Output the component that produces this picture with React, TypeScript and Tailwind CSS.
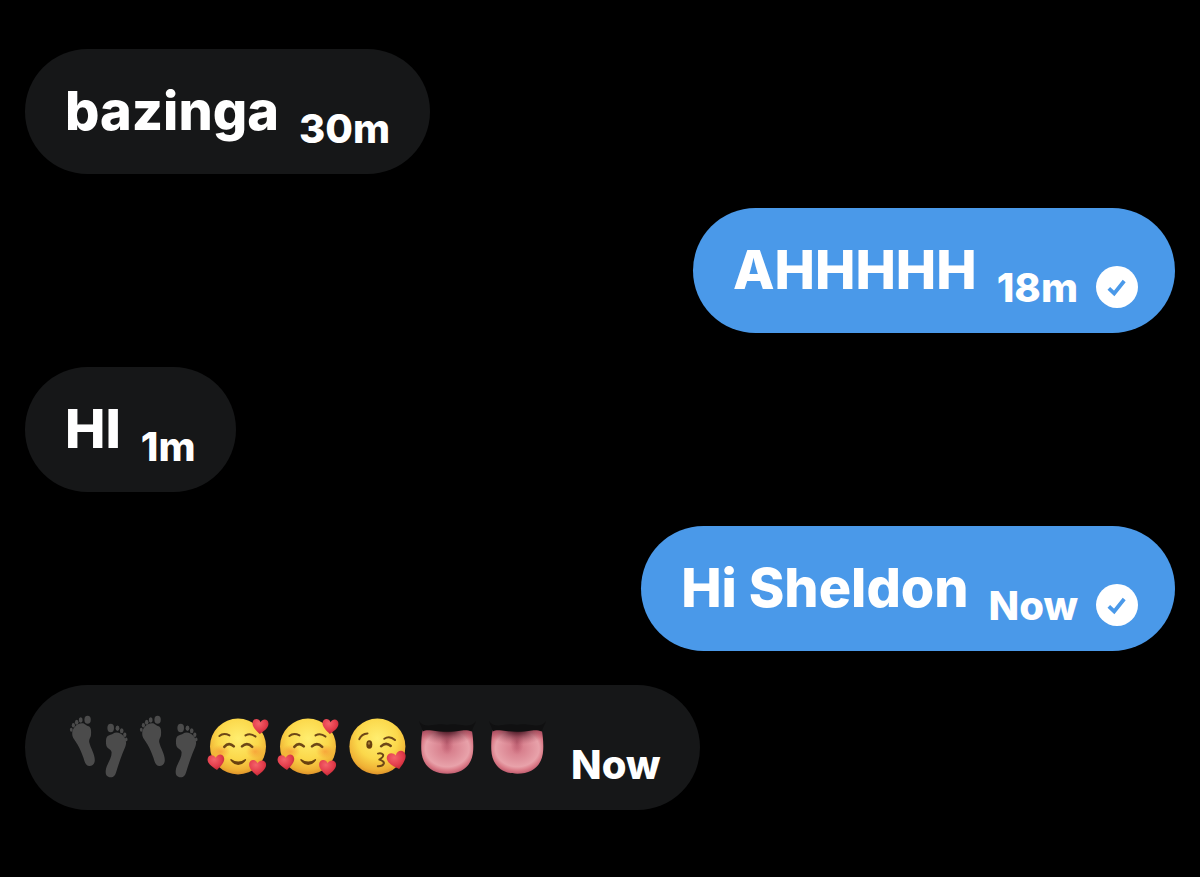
import type { ReactNode } from "react";

const HEART =
  "M0 8 C-3 5.5 -8.5 1.5 -8.5 -3 C-8.5 -8.5 -2 -9 0 -4.5 C2 -9 8.5 -8.5 8.5 -3 C8.5 1.5 3 5.5 0 8 Z";

function Gradients() {
  return (
    <svg width="0" height="0" className="absolute" aria-hidden="true">
      <defs>
        <radialGradient id="face" cx="0.5" cy="0.36" r="0.66">
          <stop offset="0" stopColor="#ffee70" />
          <stop offset="0.55" stopColor="#fbd84b" />
          <stop offset="0.85" stopColor="#efb034" />
          <stop offset="1" stopColor="#d98c28" />
        </radialGradient>
        <radialGradient id="blush">
          <stop offset="0" stopColor="#f47a2c" stopOpacity="0.5" />
          <stop offset="1" stopColor="#f47a2c" stopOpacity="0" />
        </radialGradient>
        <radialGradient id="heart" cx="0.4" cy="0.3" r="0.75">
          <stop offset="0" stopColor="#f4626a" />
          <stop offset="0.6" stopColor="#e23c4b" />
          <stop offset="1" stopColor="#b9252f" />
        </radialGradient>
        <radialGradient id="tongue" cx="0.5" cy="0.42" r="0.6">
          <stop offset="0" stopColor="#d27584" />
          <stop offset="0.7" stopColor="#e8a2aa" />
          <stop offset="0.85" stopColor="#d97986" />
          <stop offset="1" stopColor="#b9566a" />
        </radialGradient>
        <radialGradient id="mouthShade" cx="0.5" cy="-0.02" r="0.5" gradientTransform="translate(-0.1 0) scale(1.2 0.7)">
          <stop offset="0" stopColor="#2a0a12" />
          <stop offset="0.35" stopColor="#5c1e2d" stopOpacity="0.75" />
          <stop offset="1" stopColor="#a84558" stopOpacity="0" />
        </radialGradient>
        <radialGradient id="groove">
          <stop offset="0" stopColor="#a04358" stopOpacity="0.6" />
          <stop offset="1" stopColor="#b85468" stopOpacity="0" />
        </radialGradient>
      </defs>
    </svg>
  );
}

function Emoji({ label, children }: { label: string; children: ReactNode }) {
  return (
    <svg viewBox="0 2 66 74" role="img" aria-label={label} className="h-[74px] w-[66px] shrink-0">
      {children}
    </svg>
  );
}

function Footprints() {
  return (
    <Emoji label="Footprints">
      <g fill="#4b4b4b">
        <ellipse cx="22.6" cy="11.7" rx="3.2" ry="4" />
        <ellipse cx="15.7" cy="12" rx="1.9" ry="2.7" />
        <ellipse cx="11.7" cy="14.2" rx="1.8" ry="2.5" />
        <ellipse cx="8.4" cy="17.3" rx="1.6" ry="2.2" />
        <ellipse cx="6.3" cy="21.7" rx="1.4" ry="2" />
        <path d="M7.2 26 C7 21 11 15.5 17 15.3 C20 15.3 20.5 17.4 23 18 C26.5 19 26.2 23 26 27 C25.8 30 23.5 31 24.3 34.5 C25.5 40 29.8 46 29.8 52 C29.8 55.8 27.5 58 24.5 58 C20.5 58 19.8 54 18.5 50 C16.8 45 15 41 12.5 36.5 C10 32 7.4 30 7.2 26 Z" />
        <ellipse cx="45.7" cy="20" rx="3.3" ry="4.2" />
        <ellipse cx="52.5" cy="20.2" rx="1.9" ry="2.7" />
        <ellipse cx="56.7" cy="22.8" rx="1.8" ry="2.5" />
        <ellipse cx="59.8" cy="26.8" rx="1.6" ry="2.2" />
        <ellipse cx="61.2" cy="31.4" rx="1.3" ry="1.9" />
        <path d="M41 35.5 C40.8 30 41.5 27.8 45.5 26.8 C48 26.2 48.5 24.5 51.5 24.5 C57.5 24.8 61.8 30.5 61 36 C60.4 39.5 58.8 42 57.3 46 C55 52 53 58 51.2 64 C50 68 48.5 69.3 45.7 69.2 C41.8 69 40.4 66.5 40.7 62.7 C41.2 56.5 46.7 51 46.6 44.5 C46.5 40.5 41.3 41.5 41 35.5 Z" />
      </g>
    </Emoji>
  );
}

function SmilingHearts() {
  return (
    <Emoji label="Smiling face with hearts">
      <circle cx="33" cy="38.5" r="28" fill="url(#face)" />
      <ellipse cx="16" cy="43.5" rx="9" ry="7" fill="url(#blush)" />
      <ellipse cx="50" cy="43.5" rx="9" ry="7" fill="url(#blush)" />
      <g fill="none" stroke="#6d4717" strokeLinecap="round">
        <path d="M14.4 28 Q18.5 24.4 24.5 27.4" strokeWidth="2" />
        <path d="M40.5 27.4 Q45.5 24.4 50.5 28.6" strokeWidth="2" />
        <path d="M19.3 38.8 Q24 33.6 28.8 38.4" strokeWidth="2.6" />
        <path d="M37 38.4 Q42 33.6 47.2 38.8" strokeWidth="2.6" />
      </g>
      <path
        d="M26 51 Q33.2 56 40.4 51 Q41.4 51 41 52.3 Q37.8 57 33.2 57 Q28.6 57 25.4 52.3 Q25 51 26 51 Z"
        fill="#68410f"
      />
      <g fill="url(#heart)">
        <path d={HEART} transform="translate(55.3 18.4) rotate(4) scale(0.94)" />
        <path d={HEART} transform="translate(11.2 54.2) rotate(-6) scale(0.98)" />
        <path d={HEART} transform="translate(52.5 59.8) rotate(2) scale(1)" />
      </g>
    </Emoji>
  );
}

function BlowingKiss() {
  return (
    <Emoji label="Face blowing a kiss">
      <circle cx="32.4" cy="38.5" r="28" fill="url(#face)" />
      <g fill="none" stroke="#6d4717" strokeLinecap="round" strokeLinejoin="round">
        <path d="M14.3 31.2 Q16.5 25.8 22.5 25.4" strokeWidth="2" />
        <path d="M39.3 30.8 Q44.5 27 50 32" strokeWidth="2" />
        <path d="M36 38.3 Q41 33.6 45.8 38" strokeWidth="2.4" />
        <path
          d="M33 45.6 Q36.5 44.8 38 46.6 Q39 48.6 34.4 51.6 Q39.6 53.2 38.8 55.6 Q37.6 58.4 32.8 58.2"
          strokeWidth="2"
        />
      </g>
      <ellipse cx="24.3" cy="36.5" rx="3" ry="4.3" fill="#68410f" />
      <ellipse cx="24" cy="35.2" rx="1.1" ry="1.5" fill="#a27a36" />
      <path d={HEART} transform="translate(52 52.3) rotate(-14) scale(1.12)" fill="url(#heart)" />
    </Emoji>
  );
}

function Tongue() {
  const outline =
    "M7.6 22 H56.8 C57.8 28 58.6 34 58.2 42 C57.5 57 48 65.8 32.3 65.8 C16.5 65.8 7 57 6.3 42 C6 34 6.6 28 7.6 22 Z";
  return (
    <Emoji label="Tongue">
      <path d={outline} fill="url(#tongue)" />
      <ellipse cx="32" cy="34" rx="7" ry="13" fill="url(#groove)" />
      <path d={outline} fill="url(#mouthShade)" />
      <path
        d="M4 13 C6.5 16.5 10 18 14 17.5 C22 16.5 27 15.5 32.3 17 C37 15.5 42 16.5 50 17.5 C55 18 58.5 16.5 61 13 C60 17 57.4 19.5 57 23.5 C53 22 50 22 47 22.5 C42 23.4 37 23.8 32.3 23.8 C27 23.8 22 23.4 17 22.5 C13 22 10 22 7.6 23.5 C7.2 19.5 5 17 4 13 Z"
        fill="#101011"
      />
    </Emoji>
  );
}

function SentBadge() {
  return (
    <svg viewBox="0 0 42 42" role="img" aria-label="Sent" className="mb-[25px] size-[42px] shrink-0">
      <circle cx="21" cy="21" r="21" fill="#fff" />
      <path d="M12.8 22.3 L18.2 27.4 L28.2 15" fill="none" stroke="#4a99e9" strokeWidth="3.8" />
    </svg>
  );
}

function Message({ children, time, sent = false }: { children: ReactNode; time: string; sent?: boolean }) {
  return (
    <li
      className={
        sent
          ? "flex items-end self-end rounded-full bg-[#4a99e9] pr-[37px] pl-[40px]"
          : "flex items-end self-start rounded-full bg-[#161718] px-[40px]"
      }
    >
      <div className="flex gap-1 pt-[25px] pr-5 pb-[26px] text-[54px] leading-[74px] whitespace-nowrap">
        {children}
      </div>
      <div className="flex items-end gap-[18px]">
        <time className="pb-[18px] text-[40px] leading-[54px]">{time}</time>
        {sent && <SentBadge />}
      </div>
    </li>
  );
}

export default function App() {
  return (
    <main className="min-h-screen bg-black px-[25px] pt-[49px] pb-[67px] font-['Inter','Open_Sans',sans-serif] font-extrabold text-white">
      <Gradients />
      <ul className="flex flex-col gap-[34px]">
        <Message time="30m">bazinga</Message>
        <Message time="18m" sent>AHHHHH</Message>
        <Message time="1m">HI</Message>
        <Message time="Now" sent>Hi Sheldon</Message>
        <Message time="Now">
          <Footprints />
          <Footprints />
          <SmilingHearts />
          <SmilingHearts />
          <BlowingKiss />
          <Tongue />
          <Tongue />
        </Message>
      </ul>
    </main>
  );
}
